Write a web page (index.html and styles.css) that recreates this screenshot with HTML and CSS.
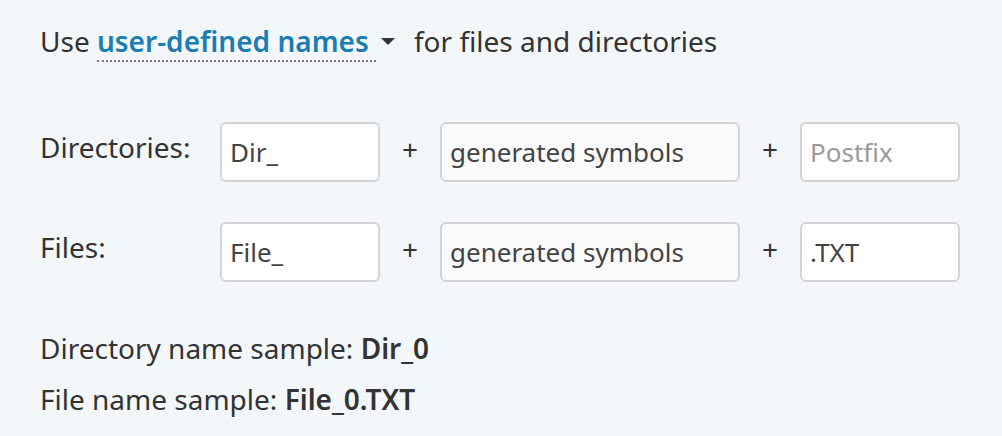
FILE: index.html
```html
<!DOCTYPE html>
<html>
<head>
<meta charset="utf-8">
<link rel="stylesheet" href="styles.css">
</head>
<body>
<div class="page">
  <p class="intro">Use <span class="dropdown">user-defined names</span><span class="caret"></span> for files and directories</p>
  <div class="rows">
    <div class="row">
      <span class="label">Directories:</span>
      <input class="box short" type="text" value="Dir_">
      <span class="plus">+</span>
      <input class="box long" type="text" value="generated symbols" readonly>
      <span class="plus">+</span>
      <input class="box short" type="text" placeholder="Postfix">
    </div>
    <div class="row">
      <span class="label">Files:</span>
      <input class="box short" type="text" value="File_">
      <span class="plus">+</span>
      <input class="box long" type="text" value="generated symbols" readonly>
      <span class="plus">+</span>
      <input class="box short" type="text" value=".TXT">
    </div>
  </div>
  <div class="samples">
    <p class="sample">Directory name sample: <b>Dir_0</b></p>
    <p class="sample">File name sample: <b>File_0.TXT</b></p>
  </div>
</div>
</body>
</html>
```
FILE: styles.css
```css
html, body {
  margin: 0;
  padding: 0;
  background: #f4f7fa;
}
body {
  font-family: "Noto Sans", "Open Sans", sans-serif;
  font-size: 28px;
  color: #333333;
}
.page {
  padding: 21px 40px 0 40px;
}
.intro {
  margin: 0;
  line-height: 40px;
  white-space: nowrap;
}
.dropdown {
  color: #1a7db3;
  font-weight: 600;
  border-bottom: 2px dotted #777;
  padding-right: 7px;
}
.caret {
  display: inline-block;
  width: 0;
  height: 0;
  border-left: 7px solid transparent;
  border-right: 7px solid transparent;
  border-top: 7px solid #333;
  margin: 0 12px 7px 5px;
}
.rows {
  margin-top: 61px;
  display: flex;
  flex-direction: column;
  gap: 40px;
}
.row {
  display: flex;
  align-items: flex-start;
}
.label {
  width: 180px;
  line-height: 40px;
  padding-top: 5px;
}
.box {
  box-sizing: border-box;
  height: 60px;
  border: 2px solid #d2d4d6;
  border-radius: 6px;
  background: #ffffff;
  font-family: "Noto Sans", "Open Sans", sans-serif;
  font-size: 26px;
  color: #444;
  padding: 0 8px;
  margin: 0;
  outline: none;
}
.box::placeholder {
  color: #9a9a9a;
}
.box.short {
  width: 160px;
}
.box.long {
  width: 300px;
  background: #fafafa;
}
.plus {
  width: 60px;
  text-align: center;
  line-height: 60px;
  margin-top: -3px;
}
.samples {
  margin-top: 41px;
}
.sample {
  margin: 0;
  line-height: 51px;
}
.sample b {
  font-weight: 600;
}
```
